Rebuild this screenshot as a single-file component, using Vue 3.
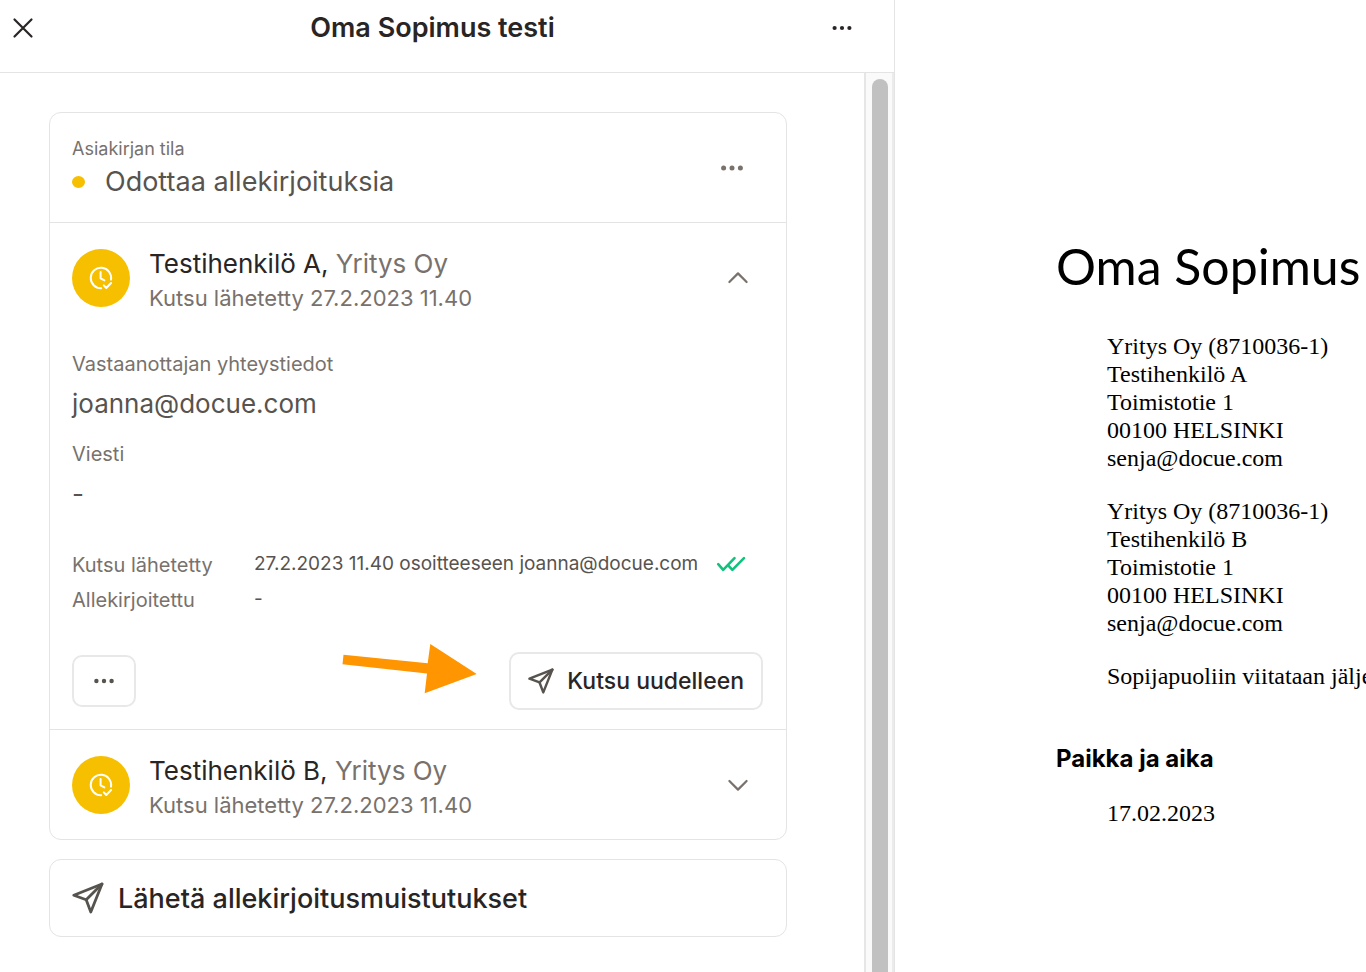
<script setup>
import { ref } from 'vue'

const details = [
  { label: 'Kutsu lähetetty', value: '27.2.2023 11.40 osoitteeseen joanna@docue.com', delivered: true },
  { label: 'Allekirjoitettu', value: '-', delivered: false },
]

const signers = ref([
  { id: 'a', name: 'Testihenkilö A,', company: 'Yritys Oy', sent: 'Kutsu lähetetty 27.2.2023 11.40', open: true },
  { id: 'b', name: 'Testihenkilö B,', company: 'Yritys Oy', sent: 'Kutsu lähetetty 27.2.2023 11.40', open: false },
])

const parties = [
  ['Yritys Oy (8710036-1)', 'Testihenkilö A', 'Toimistotie 1', '00100 HELSINKI', 'senja@docue.com'],
  ['Yritys Oy (8710036-1)', 'Testihenkilö B', 'Toimistotie 1', '00100 HELSINKI', 'senja@docue.com'],
]
</script>

<template>
  <div class="page">
    <section class="panel">
      <header class="topbar">
        <button class="icon-btn" type="button" aria-label="Sulje">
          <svg width="22" height="22" viewBox="0 0 22 22" fill="none" stroke="currentColor" stroke-width="2.2" stroke-linecap="round">
            <path d="M2.5 2.5l17 17M19.5 2.5l-17 17" />
          </svg>
        </button>
        <h1 class="title">Oma Sopimus testi</h1>
        <button class="icon-btn end" type="button" aria-label="Valikko">
          <svg width="20" height="6" viewBox="0 0 20 6" fill="currentColor">
            <circle cx="2.6" cy="3" r="2.1" /><circle cx="10" cy="3" r="2.1" /><circle cx="17.4" cy="3" r="2.1" />
          </svg>
        </button>
      </header>

      <div class="scroller">
        <main class="content">
          <div class="card">
            <div class="status">
              <div>
                <p class="label">Asiakirjan tila</p>
                <p class="state"><span class="dot"></span>Odottaa allekirjoituksia</p>
              </div>
              <button class="icon-btn muted" type="button" aria-label="Asiakirjan toiminnot">
                <svg width="24" height="6" viewBox="0 0 24 6" fill="currentColor">
                  <circle cx="3.6" cy="3" r="2.5" /><circle cx="12" cy="3" r="2.5" /><circle cx="20.4" cy="3" r="2.5" />
                </svg>
              </button>
            </div>

            <article v-for="s in signers" :key="s.id" class="signer">
              <div class="signer-head">
                <span class="avatar">
                  <svg width="26" height="26" viewBox="0 0 26 26" fill="none" stroke="currentColor" stroke-width="2" stroke-linecap="round" stroke-linejoin="round">
                    <path d="M13.2 23.2A10.2 10.2 0 1 1 23 14.6" />
                    <path d="M12.6 7v6.4l3.8 2" />
                    <path d="M15.8 20.4l2.5 2.6 4.8-5" />
                  </svg>
                </span>
                <div class="who">
                  <p class="name">{{ s.name }} <span class="company">{{ s.company }}</span></p>
                  <p class="sent">{{ s.sent }}</p>
                </div>
                <button class="icon-btn muted toggle" type="button" :aria-expanded="s.open" :aria-label="s.name" @click="s.open = !s.open">
                  <svg width="22" height="14" viewBox="0 0 22 14" fill="none" stroke="currentColor" stroke-width="2.2" stroke-linecap="round" stroke-linejoin="round">
                    <path v-if="s.open" d="M2.4 11L11 2.4l8.6 8.6" />
                    <path v-else d="M2.4 3L11 11.6 19.6 3" />
                  </svg>
                </button>
              </div>

              <div v-if="s.open" class="signer-body">
                <p class="label large">Vastaanottajan yhteystiedot</p>
                <p class="value">joanna@docue.com</p>
                <p class="label large">Viesti</p>
                <p class="value">-</p>

                <dl class="details">
                  <div v-for="d in details" :key="d.label" class="detail">
                    <dt>{{ d.label }}</dt>
                    <dd>
                      {{ d.value }}
                      <svg v-if="d.delivered" class="ticks" width="30" height="16" viewBox="0 0 30 16" fill="none" stroke="currentColor" stroke-width="2.6" stroke-linecap="round" stroke-linejoin="round">
                        <path d="M2.2 8.2l5 5.6L18.5 2.2" />
                        <path d="M12.4 9.6l4 4.2L28 2.2" />
                      </svg>
                    </dd>
                  </div>
                </dl>

                <div class="actions">
                  <button class="btn more" type="button" aria-label="Lisää toimintoja">
                    <svg width="20" height="6" viewBox="0 0 20 6" fill="currentColor">
                      <circle cx="2.4" cy="3" r="2.2" /><circle cx="10" cy="3" r="2.2" /><circle cx="17.6" cy="3" r="2.2" />
                    </svg>
                  </button>
                  <svg class="pointer" width="136" height="52" viewBox="0 0 136 52" aria-hidden="true">
                    <path d="M1.5 11.7L85.7 20.3 88.3 1 134.7 31 82.7 50.3 85 30.4.5 21.3z" fill="#ff9500" />
                  </svg>
                  <button class="btn resend" type="button">
                    <svg class="plane" width="26" height="26" viewBox="0 0 32 32" fill="none" stroke="currentColor" stroke-width="3" stroke-linecap="round" stroke-linejoin="round">
                      <path d="M30 2L1.8 13.2l12.4 4.6L18.8 30z" />
                      <path d="M30 2L14.2 17.8" />
                    </svg>
                    Kutsu uudelleen
                  </button>
                </div>
              </div>
            </article>
          </div>

          <button class="remind" type="button">
            <svg class="plane" width="32" height="32" viewBox="0 0 32 32" fill="none" stroke="currentColor" stroke-width="2.8" stroke-linecap="round" stroke-linejoin="round">
              <path d="M30 2L1.8 13.2l12.4 4.6L18.8 30z" />
              <path d="M30 2L14.2 17.8" />
            </svg>
            Lähetä allekirjoitusmuistutukset
          </button>
        </main>
        <div class="track" aria-hidden="true"><div class="thumb"></div></div>
      </div>
    </section>

    <section class="document">
      <h2 class="doc-title">Oma Sopimus</h2>
      <p v-for="(lines, i) in parties" :key="i" class="para">
        <span v-for="line in lines" :key="line" class="line">{{ line }}</span>
      </p>
      <p class="para">Sopijapuoliin viitataan jälje</p>
      <h3 class="doc-heading">Paikka ja aika</h3>
      <p class="para">17.02.2023</p>
    </section>
  </div>
</template>

<style>
body {
  margin: 0;
  background: #fff;
}
</style>

<style scoped>
.page {
  display: grid;
  grid-template-columns: 895fr 471fr;
  height: 100vh;
  overflow: hidden;
  font-family: Inter, "Noto Sans", sans-serif;
  color: #292524;
}
h1, h2, h3, p, dl, dd {
  margin: 0;
}
button {
  font-family: inherit;
  color: inherit;
  background: none;
  border: 0;
  padding: 0;
  cursor: pointer;
}
svg {
  display: block;
  flex: none;
}
.panel {
  display: flex;
  flex-direction: column;
  min-width: 0;
  min-height: 0;
  box-sizing: border-box;
  border-right: 1px solid #e4e4e4;
}
.topbar {
  display: grid;
  grid-template-columns: 1fr auto 1fr;
  align-items: center;
  padding: 0 37px 16px 8px;
  height: 56px;
  border-bottom: 1px solid #e4e4e4;
}
.icon-btn {
  display: flex;
  align-items: center;
  justify-content: center;
  width: 30px;
  height: 30px;
}
.end {
  justify-self: end;
}
.muted {
  color: #78716c;
}
.title {
  font-size: 27px;
  line-height: 36px;
  font-weight: 600;
}
.scroller {
  display: flex;
  flex: 1;
  min-height: 0;
}
.content {
  flex: 1;
  min-width: 0;
  padding: 39px 77px 35px 49px;
  overflow: hidden;
}
.track {
  width: 16px;
  padding: 6px 4px 0 6px;
  border-left: 2px solid #e6e6e6;
  border-right: 2px solid #ebebeb;
  background: #fafafa;
  display: flex;
}
.thumb {
  width: 16px;
  border-radius: 8px 8px 0 0;
  background: #c1c1c1;
}
.card {
  border: 1px solid #e4e4e4;
  border-radius: 12px;
}
.status {
  display: flex;
  align-items: center;
  justify-content: space-between;
  padding: 22px 39px 21px 22px;
}
.label {
  font-size: 18px;
  line-height: 28px;
  color: #78716c;
}
.large {
  font-size: 20px;
}
.state {
  display: flex;
  align-items: center;
  gap: 20px;
  font-size: 27px;
  line-height: 38px;
  color: #57534e;
}
.dot {
  width: 13px;
  height: 12px;
  border-radius: 50%;
  background: #f6bf00;
}
.signer {
  border-top: 1px solid #e4e4e4;
  padding: 24px 23px 17px 22px;
}
.signer-head {
  display: flex;
  align-items: flex-start;
}
.avatar {
  display: flex;
  align-items: center;
  justify-content: center;
  width: 58px;
  height: 58px;
  margin: 2px 19px 0 0;
  border-radius: 50%;
  background: #f6bf00;
  color: #fff;
}
.who {
  flex: 1;
}
.name {
  font-size: 26px;
  line-height: 34px;
}
.company {
  color: #78716c;
}
.sent {
  font-size: 22px;
  line-height: 34px;
  color: #78716c;
}
.toggle {
  height: 58px;
  margin: 2px 10px 0 0;
}
.signer-body {
  padding: 35px 0 2px;
}
.value {
  font-size: 26px;
  line-height: 36px;
  padding: 8px 0 18px;
  color: #57534e;
}
.details {
  padding-top: 18px;
}
.detail {
  display: grid;
  grid-template-columns: 182px 1fr;
  line-height: 35px;
}
.detail dt {
  font-size: 20px;
  color: #78716c;
}
.detail dd {
  display: flex;
  align-items: center;
  gap: 18px;
  font-size: 19px;
  line-height: 32px;
  height: 32px;
  color: #57534e;
  white-space: nowrap;
}
.ticks {
  color: #10c27c;
}
.actions {
  position: relative;
  display: flex;
  align-items: center;
  justify-content: space-between;
  padding-top: 34px;
}
.btn {
  display: flex;
  align-items: center;
  justify-content: center;
  border: 2px solid #e9e8e8;
  border-radius: 10px;
}
.more {
  width: 64px;
  height: 52px;
  color: #57534e;
}
.resend {
  gap: 13px;
  height: 58px;
  padding: 0 17px;
  font-size: 23px;
  font-weight: 500;
}
.plane {
  color: #57534e;
}
.pointer {
  position: absolute;
  right: 285px;
  bottom: 15px;
}
.remind {
  display: flex;
  align-items: center;
  gap: 14px;
  width: 100%;
  height: 78px;
  margin-top: 19px;
  padding: 0 22px;
  border: 1px solid #e4e4e4;
  border-radius: 12px;
  font-size: 27px;
  font-weight: 500;
}
.document {
  min-width: 0;
  overflow: hidden;
  padding: 235px 0 0 161px;
  color: #000;
  white-space: nowrap;
}
.doc-title {
  font-family: Lato, sans-serif;
  font-size: 50px;
  line-height: 62px;
  font-weight: 400;
  padding-bottom: 35px;
}
.para {
  font-family: "Liberation Serif", serif;
  font-size: 24px;
  line-height: 28px;
  padding: 0 0 25px 51px;
}
.line {
  display: block;
}
.doc-heading {
  font-size: 24px;
  line-height: 30px;
  font-weight: 700;
  padding: 29px 0 25px;
}
</style>
